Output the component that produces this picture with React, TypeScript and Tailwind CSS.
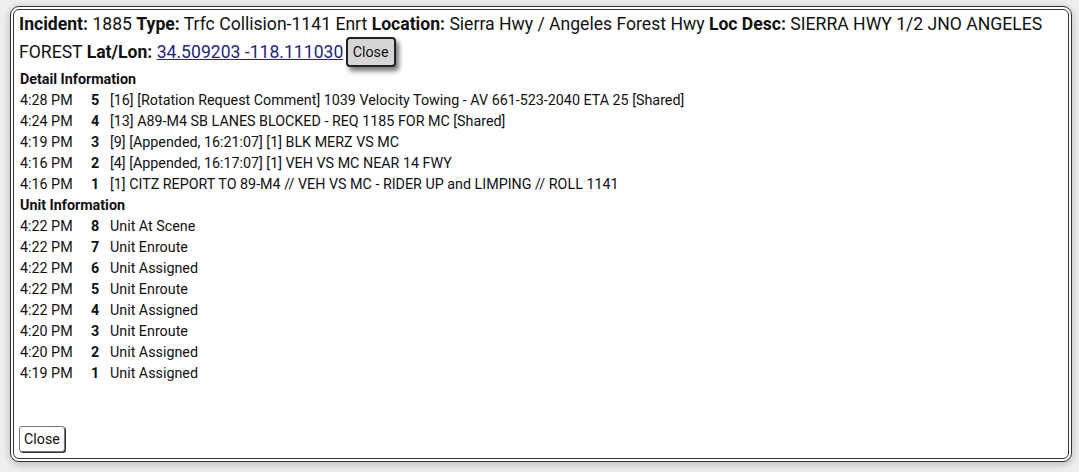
const DETAILS = [
  { time: "4:28 PM", n: 5, text: "[16] [Rotation Request Comment] 1039 Velocity Towing - AV 661-523-2040 ETA 25 [Shared]" },
  { time: "4:24 PM", n: 4, text: "[13] A89-M4 SB LANES BLOCKED - REQ 1185 FOR MC [Shared]" },
  { time: "4:19 PM", n: 3, text: "[9] [Appended, 16:21:07] [1] BLK MERZ VS MC" },
  { time: "4:16 PM", n: 2, text: "[4] [Appended, 16:17:07] [1] VEH VS MC NEAR 14 FWY" },
  { time: "4:16 PM", n: 1, text: "[1] CITZ REPORT TO 89-M4 // VEH VS MC - RIDER UP and LIMPING // ROLL 1141" },
];

const UNITS = [
  { time: "4:22 PM", n: 8, text: "Unit At Scene" },
  { time: "4:22 PM", n: 7, text: "Unit Enroute" },
  { time: "4:22 PM", n: 6, text: "Unit Assigned" },
  { time: "4:22 PM", n: 5, text: "Unit Enroute" },
  { time: "4:22 PM", n: 4, text: "Unit Assigned" },
  { time: "4:20 PM", n: 3, text: "Unit Enroute" },
  { time: "4:20 PM", n: 2, text: "Unit Assigned" },
  { time: "4:19 PM", n: 1, text: "Unit Assigned" },
];

type Row = { time: string; n: number; text: string };

function Section({ title, rows }: { title: string; rows: Row[] }) {
  return (
    <div>
      <div className="font-bold text-[14.3px] leading-[21px] pl-[1px]">{title}</div>
      {rows.map((r, i) => (
        <div key={i} className="flex text-[14.3px] leading-[21px] pl-[1px]">
          <span className="w-[71px] shrink-0">{r.time}</span>
          <span className="w-[19px] shrink-0 font-bold">{r.n}</span>
          <span>{r.text}</span>
        </div>
      ))}
    </div>
  );
}

export default function App() {
  return (
    <div className="w-[1079px] h-[472px] bg-[#efefef] pt-[6px] pl-[10px] font-['Roboto',sans-serif] text-[#111]">
      <div className="w-[1062px] h-[456px] bg-white rounded-[9px] border-[4px] border-double border-[#333] shadow-[0_2px_8px_rgba(0,0,0,0.25)] flex flex-col px-[5px] pt-[2px] pb-[6px]">
        <div className="text-[17.6px] leading-[25px]">
          <b>Incident:</b> 1885 <b>Type:</b> Trfc Collision-1141 Enrt <b>Location:</b> Sierra Hwy / Angeles Forest Hwy{" "}
          <b>Loc Desc:</b> SIERRA HWY 1/2 JNO ANGELES FOREST <b>Lat/Lon:</b>{" "}
          <a href="#" className="text-[#25257d] underline">34.509203 -118.111030</a>{" "}
          <button className="-ml-[2px] align-[1px] text-[14.3px] leading-[18px] px-[5px] py-[4px] bg-[#d6d6d6] border-2 border-[#222] rounded-[4px] shadow-[3px_4px_5px_rgba(0,0,0,0.55)] font-['Roboto',sans-serif]">
            Close
          </button>
        </div>
        <div className="mt-[2px] flex flex-col">
          <Section title="Detail Information" rows={DETAILS} />
          <Section title="Unit Information" rows={UNITS} />
        </div>
        <div className="mt-auto">
          <button className="text-[14.3px] leading-[18px] px-[4px] py-[3px] bg-white border border-[#777] rounded-[3px] shadow-[1px_1px_0_#333]">
            Close
          </button>
        </div>
      </div>
    </div>
  );
}
